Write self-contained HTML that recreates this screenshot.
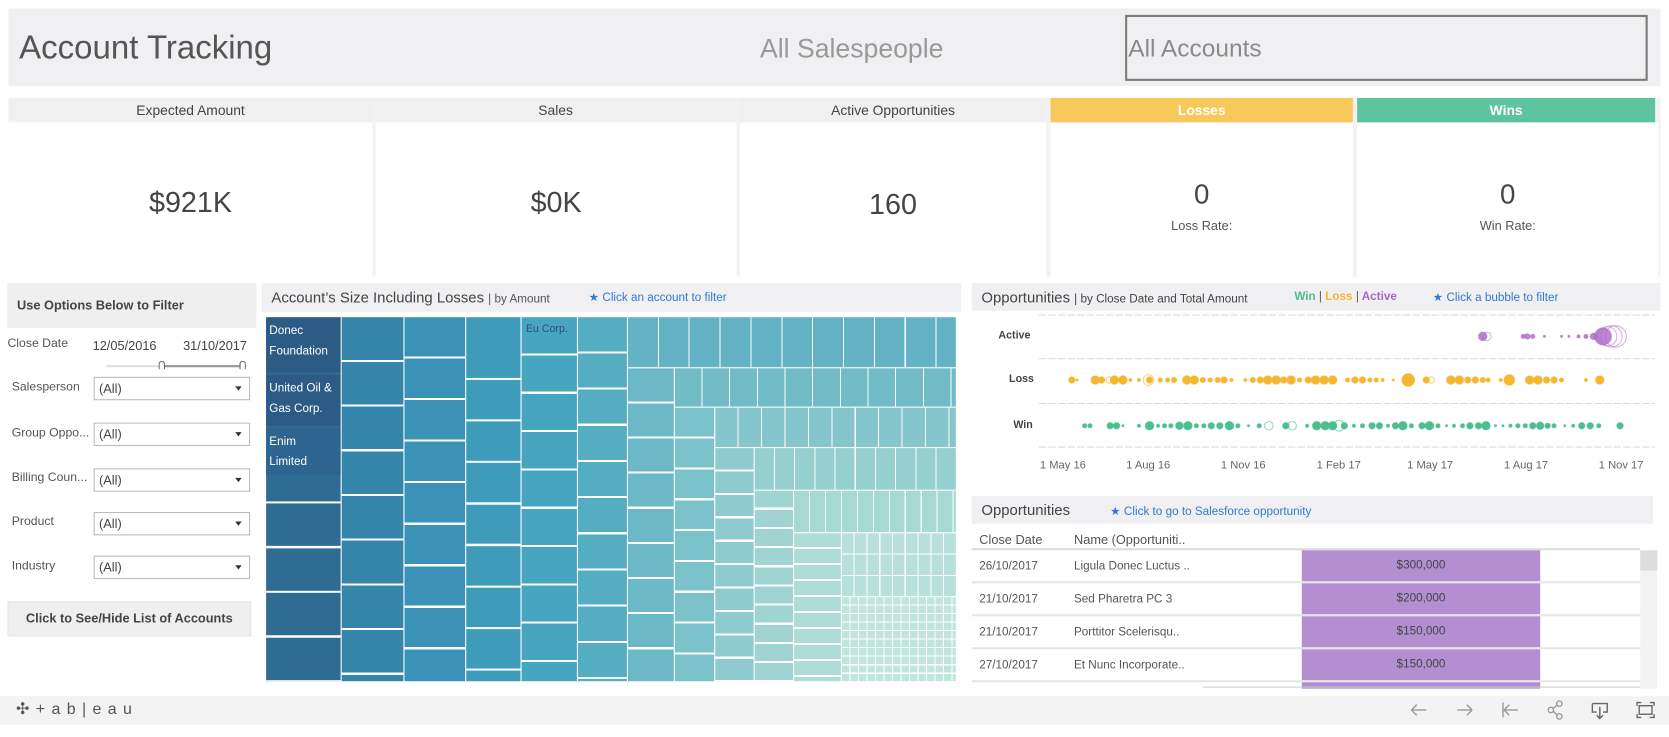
<!DOCTYPE html>
<html><head><meta charset="utf-8"><style>
*{box-sizing:border-box;margin:0;padding:0}
html,body{width:1669px;height:737px;overflow:hidden;background:#fff;font-family:"Liberation Sans",sans-serif;color:#555}
#w{position:absolute;left:0;top:0;width:1568px;height:692px;transform:scale(1.06441);transform-origin:0 0}
.a{position:absolute}
.hd{background:#f0f0f2}
.kh{position:absolute;top:92px;height:23px;background:#f0f0f0;font-size:13px;text-align:center;line-height:23px;color:#444}
.kb{position:absolute;top:115px;height:145px;background:#fff;text-align:center}
.big{font-size:27px;color:#444;position:absolute;width:100%;top:60px}
.lab{position:absolute;left:7px;font-size:11.5px;color:#555}
.dd{position:absolute;left:88px;width:147px;height:22px;border:1px solid #bbb;background:#fff;font-size:12px;line-height:20px;padding-left:4px;color:#444}
.dd:after{content:"";position:absolute;right:7px;top:8px;border-left:3.5px solid transparent;border-right:3.5px solid transparent;border-top:4px solid #333}
.tm{position:absolute}
.h{background-image:repeating-linear-gradient(to bottom,transparent 0,transparent var(--s),#fff var(--s),#fff calc(var(--s) + 2px))}
.v{background-image:repeating-linear-gradient(to right,transparent 0,transparent var(--s),#fff var(--s),#fff calc(var(--s) + 1px))}
.g{background-image:repeating-linear-gradient(to right,transparent 0,transparent var(--s),#fff var(--s),#fff calc(var(--s) + 1px)),repeating-linear-gradient(to bottom,transparent 0,transparent var(--t),#fff var(--t),#fff calc(var(--t) + 1px))}
.tl{position:absolute;color:#fff;font-size:11px;line-height:19px;padding:3px 3px}
.row{position:absolute;left:913px;width:628px;height:31px;border-bottom:2px solid #e6e6e6;font-size:11px;color:#555}
.row span{position:absolute;top:9px}
.bar{position:absolute;left:310px;width:224px;top:0;height:29px;background:#b38fd1;text-align:center;line-height:29px;color:#444}
</style></head><body><div id="w">

<div class="a hd" style="left:8px;top:8px;width:1552px;height:73px"></div>
<div class="a" style="left:18px;top:27px;font-size:31px;color:#555">Account Tracking</div>
<div class="a" style="left:714px;top:32px;font-size:25px;color:#999">All Salespeople</div>
<div class="a" style="left:1057px;top:14px;width:491px;height:62px;border:2px solid #7d7d7d"></div>
<div class="a" style="left:1060px;top:32px;font-size:23px;color:#8a8a8a">All Accounts</div>

<div class="a" style="left:8px;top:92px;width:1552px;height:168px;background:#f2f2f2"></div>
<div class="kh" style="left:8px;width:342px">Expected Amount</div>
<div class="kh" style="left:352px;width:340px">Sales</div>
<div class="kh" style="left:695px;width:288px">Active Opportunities</div>
<div class="kh" style="left:987px;width:284px;background:#f9c85a;color:#fff;font-weight:bold">Losses</div>
<div class="kh" style="left:1275px;width:280px;background:#5ec4a0;color:#fff;font-weight:bold">Wins</div>
<div class="kb" style="left:8px;width:342px"><div class="big">$921K</div></div>
<div class="kb" style="left:353px;width:339px"><div class="big">$0K</div></div>
<div class="kb" style="left:695px;width:288px"><div class="big" style="top:62px">160</div></div>
<div class="kb" style="left:987px;width:284px"><div class="big" style="top:52px;font-size:26px">0</div><div style="position:absolute;top:90px;width:100%;font-size:12px">Loss Rate:</div></div>
<div class="kb" style="left:1275px;width:283px"><div class="big" style="top:52px;font-size:26px">0</div><div style="position:absolute;top:90px;width:100%;font-size:12px">Win Rate:</div></div>

<!-- filters -->
<div class="a" style="left:7px;top:266px;width:234px;height:42px;background:#efefef;font-size:12px;font-weight:bold;line-height:42px;padding-left:9px;color:#444">Use Options Below to Filter</div>
<div class="lab" style="top:317px">Close Date</div>
<div class="a" style="left:87px;top:318px;font-size:12px;color:#444">12/05/2016</div>
<div class="a" style="left:172px;top:318px;font-size:12px;color:#444">31/10/2017</div>
<div class="a" style="left:100px;top:343px;width:132px;height:2px;background:#ddd"></div>
<div class="a" style="left:153px;top:343px;width:76px;height:2px;background:#999"></div>
<div class="a" style="left:149px;top:339px;width:6px;height:8px;border:1px solid #666;border-bottom:none;border-radius:3px 3px 0 0;background:#fff"></div>
<div class="a" style="left:225px;top:339px;width:6px;height:8px;border:1px solid #666;border-bottom:none;border-radius:3px 3px 0 0;background:#fff"></div>
<div class="lab" style="left:11px;top:358px">Salesperson</div><div class="dd" style="top:354px">(All)</div>
<div class="lab" style="left:11px;top:401px">Group Oppo...</div><div class="dd" style="top:397px">(All)</div>
<div class="lab" style="left:11px;top:443px">Billing Coun...</div><div class="dd" style="top:440px">(All)</div>
<div class="lab" style="left:11px;top:484px">Product</div><div class="dd" style="top:481px">(All)</div>
<div class="lab" style="left:11px;top:526px">Industry</div><div class="dd" style="top:522px">(All)</div>
<div class="a" style="left:7px;top:565px;width:229px;height:33px;background:#efefef;border:1px solid #e4e4e4;font-size:12px;font-weight:bold;line-height:31px;text-align:center;color:#444">Click to See/Hide List of Accounts</div>

<!-- treemap -->
<div class="a hd" style="left:246px;top:266px;width:657px;height:27px"></div>
<div class="a" style="left:255px;top:271px;font-size:14px;color:#444">Account’s Size Including Losses <span style="font-size:11px;color:#555">| by Amount</span></div>
<div class="a" style="left:553px;top:273px;font-size:11px;color:#2f7ad0">★ Click an account to filter</div>

<div class="a" style="left:250px;top:298px;width:648px;height:342px;background:#fff"></div>
<div class="tm h" style="left:250px;top:298px;width:70px;height:342px;background-color:#2f6c93;--s:40px;background-position:0 7px"></div>
<div class="tm" style="left:250px;top:298px;width:70px;height:52px;background:#2c5b86"></div>
<div class="tm" style="left:250px;top:352px;width:70px;height:48px;background:#2c5b86"></div>
<div class="tm" style="left:250px;top:402px;width:70px;height:44px;background:#2d6490"></div>
<div class="tl" style="left:250px;top:299px">Donec<br>Foundation</div>
<div class="tl" style="left:250px;top:353px">United Oil &amp;<br>Gas Corp.</div>
<div class="tl" style="left:250px;top:403px">Enim<br>Limited</div>
<div class="tm h" style="left:321px;top:298px;width:58px;height:342px;background-color:#3585ab;--s:40px"></div>
<div class="tm h" style="left:380px;top:298px;width:57px;height:342px;background-color:#3a93b6;--s:37px"></div>
<div class="tm h" style="left:438px;top:298px;width:51px;height:342px;background-color:#3f9bba;--s:37px;background-position:0 20px"></div>
<div class="tm h" style="left:490px;top:298px;width:52px;height:342px;background-color:#48a5bf;--s:34px"></div>
<div class="a" style="left:494px;top:304px;font-size:10px;color:#2d5070">Eu Corp.</div>
<div class="tm h" style="left:543px;top:298px;width:46px;height:342px;background-color:#55adc2;--s:32px"></div>
<div class="tm v" style="left:590px;top:298px;width:308px;height:47px;background-color:#63b3c4;--s:28px"></div>
<div class="tm h" style="left:590px;top:346px;width:43px;height:294px;background-color:#6cb8c6;--s:31px"></div>
<div class="tm v" style="left:634px;top:346px;width:264px;height:36px;background-color:#72bcc8;--s:25px"></div>
<div class="tm h" style="left:634px;top:383px;width:37px;height:257px;background-color:#7cc2ca;--s:27px"></div>
<div class="tm v" style="left:672px;top:383px;width:226px;height:37px;background-color:#85c6cc;--s:21px"></div>
<div class="tm h" style="left:672px;top:421px;width:36px;height:219px;background-color:#8ecbce;--s:20px"></div>
<div class="tm v" style="left:709px;top:421px;width:189px;height:39px;background-color:#96cfd0;--s:18px"></div>
<div class="tm h" style="left:709px;top:461px;width:36px;height:179px;background-color:#9fd4d2;--s:16px"></div>
<div class="tm v" style="left:746px;top:461px;width:152px;height:39px;background-color:#a6d8d4;--s:14px"></div>
<div class="tm h" style="left:746px;top:501px;width:44px;height:139px;background-color:#aedcd6;--s:13px"></div>
<div class="tm g" style="left:791px;top:501px;width:107px;height:59px;background-color:#b6e0d9;--s:11px;--t:19px"></div>
<div class="tm g" style="left:791px;top:561px;width:107px;height:79px;background-color:#c0e5dd;--s:7px;--t:7px"></div>

<!-- bubble chart -->
<div class="a hd" style="left:913px;top:266px;width:647px;height:26px"></div>
<div class="a" style="left:922px;top:271px;font-size:14px;color:#444">Opportunities <span style="font-size:11px;color:#444">| by Close Date and Total Amount</span></div>
<div class="a" style="left:1216px;top:273px;font-size:11px;font-weight:bold"><span style="color:#4bbf8e">Win</span> <span style="color:#555;font-weight:normal">|</span> <span style="color:#f5b731">Loss</span> <span style="color:#555;font-weight:normal">|</span> <span style="color:#a966c6">Active</span></div>
<div class="a" style="left:1346px;top:273px;font-size:11px;color:#2f7ad0">★ Click a bubble to filter</div>
<div class="a" style="left:938px;top:310px;font-size:10px;font-weight:bold;color:#444">Active</div>
<div class="a" style="left:948px;top:351px;font-size:10px;font-weight:bold;color:#444">Loss</div>
<div class="a" style="left:952px;top:394px;font-size:10px;font-weight:bold;color:#444">Win</div>
<div class="a" style="left:977px;top:431px;width:580px;font-size:10.5px;color:#666">
<span class="a" style="left:0">1 May 16</span><span class="a" style="left:81px">1 Aug 16</span><span class="a" style="left:170px">1 Nov 16</span><span class="a" style="left:260px">1 Feb 17</span><span class="a" style="left:345px">1 May 17</span><span class="a" style="left:436px">1 Aug 17</span><span class="a" style="left:525px">1 Nov 17</span></div>

<svg class="a" style="left:0;top:0" width="1568" height="692">
<g stroke="#ddd" stroke-dasharray="7 2" stroke-width="1">
<line x1="976" y1="296" x2="1555" y2="296"/><line x1="976" y1="337" x2="1555" y2="337"/><line x1="976" y1="379" x2="1555" y2="379"/><line x1="976" y1="420" x2="1555" y2="420"/></g>
<g fill="#a966c6" fill-opacity=".8" stroke="#a966c6" stroke-opacity=".5">
<circle cx="1393" cy="316" r="4"/><circle cx="1397" cy="316" r="4" fill="none"/><circle cx="1431" cy="316" r="2"/><circle cx="1435" cy="316" r="2.5"/><circle cx="1440" cy="316" r="2"/><circle cx="1451" cy="316" r="1"/><circle cx="1467" cy="316" r="1"/><circle cx="1474" cy="316" r="1"/><circle cx="1483" cy="316" r="1.5"/><circle cx="1490" cy="316" r="2"/><circle cx="1497" cy="316" r="3"/><circle cx="1506" cy="316" r="8"/><circle cx="1510" cy="316" r="9" fill="none"/><circle cx="1514" cy="316" r="10" fill="none"/><circle cx="1518" cy="316" r="10" fill="none"/></g>
<g fill="#f5b731" stroke="#f5b731" stroke-opacity=".6">
<circle cx="1007" cy="357" r="3"/><circle cx="1012" cy="357" r="1"/><circle cx="1029" cy="357" r="4"/><circle cx="1035" cy="357" r="3"/><circle cx="1042" cy="357" r="3" fill="none"/><circle cx="1047" cy="357" r="4"/><circle cx="1055" cy="357" r="4"/><circle cx="1062" cy="357" r="1.5"/><circle cx="1070" cy="357" r="1.5"/><circle cx="1079" cy="357" r="5" fill="none"/><circle cx="1080" cy="357" r="3"/><circle cx="1090" cy="357" r="2"/><circle cx="1097" cy="357" r="2"/><circle cx="1103" cy="357" r="2.5"/><circle cx="1115" cy="357" r="4"/><circle cx="1122" cy="357" r="4"/><circle cx="1130" cy="357" r="2.5"/><circle cx="1137" cy="357" r="2"/><circle cx="1144" cy="357" r="2.5"/><circle cx="1150" cy="357" r="3"/><circle cx="1157" cy="357" r="1.5"/><circle cx="1170" cy="357" r="1.5"/><circle cx="1177" cy="357" r="2.5"/><circle cx="1184" cy="357" r="3"/><circle cx="1191" cy="357" r="4"/><circle cx="1199" cy="357" r="4"/><circle cx="1206" cy="357" r="3"/><circle cx="1213" cy="357" r="4"/><circle cx="1221" cy="357" r="2"/><circle cx="1229" cy="357" r="3"/><circle cx="1236" cy="357" r="4"/><circle cx="1244" cy="357" r="4"/><circle cx="1252" cy="357" r="4"/><circle cx="1266" cy="357" r="2"/><circle cx="1273" cy="357" r="3"/><circle cx="1280" cy="357" r="3"/><circle cx="1287" cy="357" r="2"/><circle cx="1293" cy="357" r="2"/><circle cx="1299" cy="357" r="1.5"/><circle cx="1309" cy="357" r="1"/><circle cx="1323" cy="357" r="6"/><circle cx="1340" cy="357" r="3"/><circle cx="1345" cy="357" r="3" fill="none"/><circle cx="1363" cy="357" r="4"/><circle cx="1371" cy="357" r="4"/><circle cx="1379" cy="357" r="3"/><circle cx="1386" cy="357" r="3"/><circle cx="1393" cy="357" r="2.5"/><circle cx="1398" cy="357" r="2"/><circle cx="1410" cy="357" r="1.5"/><circle cx="1418" cy="357" r="5"/><circle cx="1437" cy="357" r="4"/><circle cx="1445" cy="357" r="4"/><circle cx="1453" cy="357" r="3"/><circle cx="1460" cy="357" r="3"/><circle cx="1467" cy="357" r="2"/><circle cx="1490" cy="357" r="1.5"/><circle cx="1503" cy="357" r="4"/>
</g>
<g fill="#4bbf8e" stroke="#4bbf8e" stroke-opacity=".6">
<circle cx="1019" cy="400" r="2"/><circle cx="1024" cy="400" r="2"/><circle cx="1043" cy="400" r="3"/><circle cx="1049" cy="400" r="3"/><circle cx="1055" cy="400" r="1"/><circle cx="1070" cy="400" r="1.5"/><circle cx="1080" cy="400" r="4"/><circle cx="1088" cy="400" r="1.5"/><circle cx="1094" cy="400" r="2"/><circle cx="1100" cy="400" r="2"/><circle cx="1108" cy="400" r="3.5"/><circle cx="1116" cy="400" r="4"/><circle cx="1124" cy="400" r="2"/><circle cx="1131" cy="400" r="2"/><circle cx="1138" cy="400" r="3"/><circle cx="1146" cy="400" r="3"/><circle cx="1155" cy="400" r="4"/><circle cx="1163" cy="400" r="2"/><circle cx="1173" cy="400" r="1"/><circle cx="1183" cy="400" r="2"/><circle cx="1192" cy="400" r="4" fill="none"/><circle cx="1208" cy="400" r="3"/><circle cx="1214" cy="400" r="4" fill="none"/><circle cx="1228" cy="400" r="1.5"/><circle cx="1237" cy="400" r="4"/><circle cx="1245" cy="400" r="4"/><circle cx="1252" cy="400" r="4"/><circle cx="1258" cy="400" r="5" fill="none"/><circle cx="1263" cy="400" r="3"/><circle cx="1272" cy="400" r="1.5"/><circle cx="1280" cy="400" r="2"/><circle cx="1289" cy="400" r="3"/><circle cx="1296" cy="400" r="3"/><circle cx="1304" cy="400" r="1.5"/><circle cx="1311" cy="400" r="3"/><circle cx="1318" cy="400" r="4"/><circle cx="1326" cy="400" r="2"/><circle cx="1336" cy="400" r="3"/><circle cx="1343" cy="400" r="4"/><circle cx="1351" cy="400" r="2"/><circle cx="1359" cy="400" r="1"/><circle cx="1366" cy="400" r="1.5"/><circle cx="1374" cy="400" r="2"/><circle cx="1381" cy="400" r="3"/><circle cx="1389" cy="400" r="3"/><circle cx="1396" cy="400" r="4"/><circle cx="1405" cy="400" r="1"/><circle cx="1412" cy="400" r="1"/><circle cx="1419" cy="400" r="1.5"/><circle cx="1426" cy="400" r="2"/><circle cx="1433" cy="400" r="2"/><circle cx="1440" cy="400" r="3"/><circle cx="1447" cy="400" r="3.5"/><circle cx="1454" cy="400" r="2.5"/><circle cx="1460" cy="400" r="2"/><circle cx="1470" cy="400" r="1"/><circle cx="1478" cy="400" r="1.5"/><circle cx="1486" cy="400" r="3"/><circle cx="1494" cy="400" r="3"/><circle cx="1502" cy="400" r="2"/><circle cx="1522" cy="400" r="3"/>
</g>
</svg>

<!-- table -->
<div class="a hd" style="left:913px;top:466px;width:640px;height:26px"></div>
<div class="a" style="left:922px;top:471px;font-size:14px;color:#444">Opportunities</div>
<div class="a" style="left:1043px;top:474px;font-size:11px;color:#2f7ad0">★ Click to go to Salesforce opportunity</div>
<div class="a" style="left:920px;top:500px;font-size:12px;color:#555">Close Date</div>
<div class="a" style="left:1009px;top:500px;font-size:12px;color:#555">Name (Opportuniti..</div>
<div class="a" style="left:913px;top:515px;width:628px;height:2px;background:#ddd"></div>
<div class="row" style="top:517px"><span style="left:7px">26/10/2017</span><span style="left:96px">Ligula Donec Luctus ..</span><div class="bar">$300,000</div></div>
<div class="row" style="top:548px"><span style="left:7px">21/10/2017</span><span style="left:96px">Sed Pharetra PC 3</span><div class="bar">$200,000</div></div>
<div class="row" style="top:579px"><span style="left:7px">21/10/2017</span><span style="left:96px">Porttitor Scelerisqu..</span><div class="bar">$150,000</div></div>
<div class="row" style="top:610px"><span style="left:7px">27/10/2017</span><span style="left:96px">Et Nunc Incorporate..</span><div class="bar">$150,000</div></div>
<div class="a" style="left:1223px;top:641px;width:224px;height:6px;background:#b38fd1"></div>
<div class="a" style="left:1130px;top:645px;width:411px;height:1px;background:#ccc"></div>
<div class="a" style="left:1541px;top:517px;width:16px;height:130px;background:#f3f3f3"></div>
<div class="a" style="left:1541px;top:517px;width:16px;height:19px;background:#ddd"></div>

<!-- footer -->
<div class="a" style="left:0;top:654px;width:1568px;height:27px;background:#f3f3f3"></div>
<div class="a" style="left:15px;top:657px;font-size:15px;color:#555;letter-spacing:6px">✣+ab|eau</div>
<svg class="a" style="left:1320px;top:657px" width="245" height="22" fill="none" stroke="#999" stroke-width="1.3">
<path d="M6 10h14M6 10l5-5M6 10l5 5"/>
<path d="M49 10h14M63 10l-5-5M63 10l-5 5" />
<path d="M92 3v14M93 10h13M93 10l5-5M93 10l5 5"/>
<circle cx="137" cy="10" r="2.5"/><circle cx="145" cy="4" r="2.5"/><circle cx="145" cy="16" r="2.5"/><path d="M139 9l4-4M139 11l4 4"/>
<path d="M176 4h14v8h-4M180 12h-4V4M183 7v11M180 15l3 3 3-3" stroke="#666"/>
<path d="M218 6V3h4M230 3h4v3M234 14v3h-4M222 17h-4v-3" stroke="#666"/><rect x="220" y="6" width="12" height="8" stroke="#666"/>
</svg>
</div></body></html>
